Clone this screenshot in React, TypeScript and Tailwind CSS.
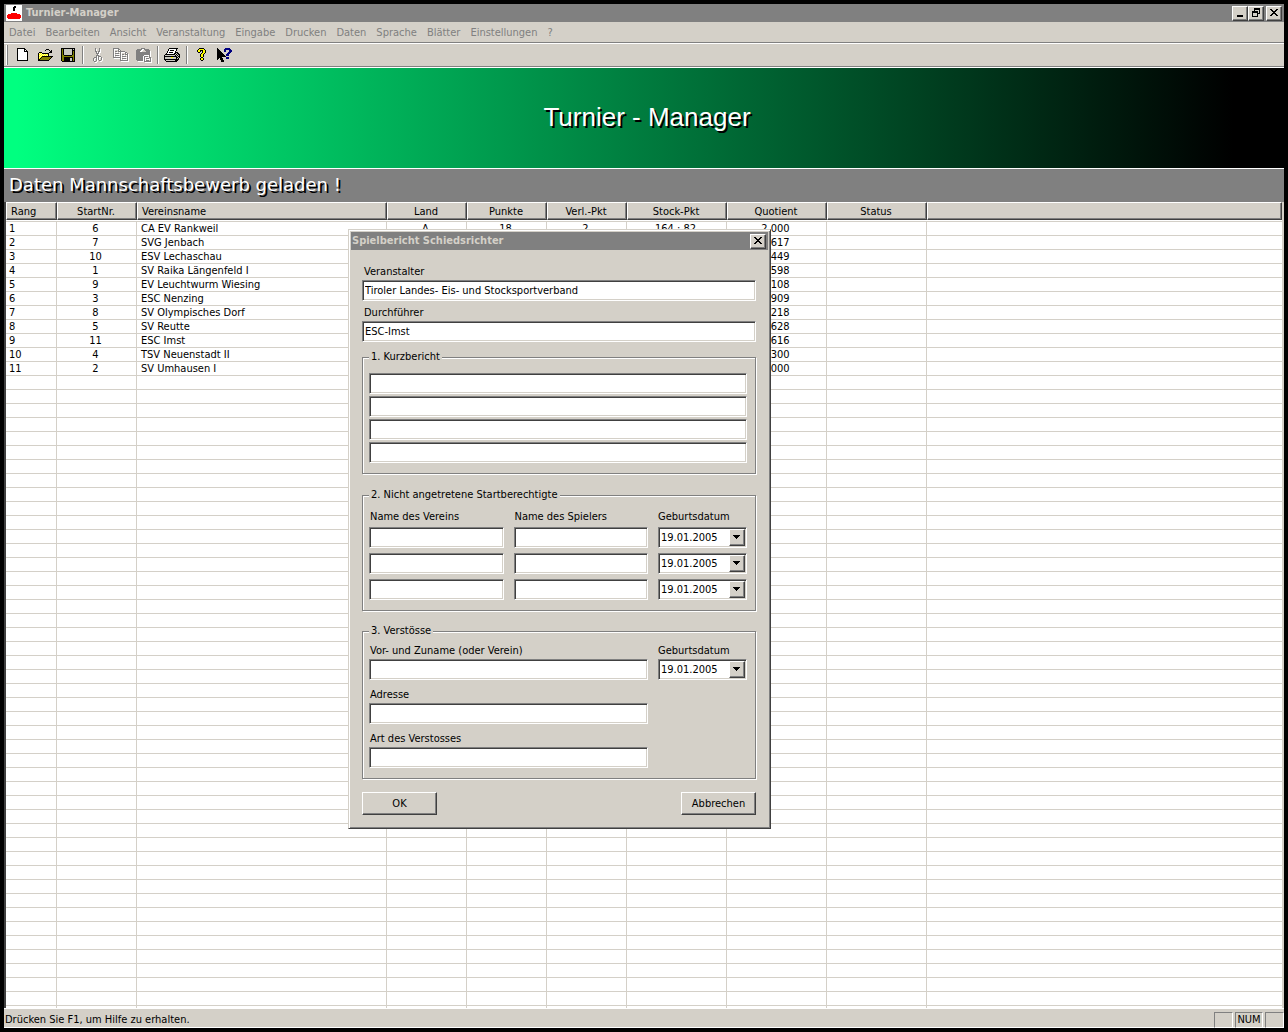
import type { ReactNode } from "react"

const MENU = [
  "Datei",
  "Bearbeiten",
  "Ansicht",
  "Veranstaltung",
  "Eingabe",
  "Drucken",
  "Daten",
  "Sprache",
  "Blätter",
  "Einstellungen",
  "?",
]

const COLUMNS = [
  { label: "Rang", width: "w-[51px]", align: "text-left" },
  { label: "StartNr.", width: "w-[80px]", align: "text-center" },
  { label: "Vereinsname", width: "w-[250px]", align: "text-left" },
  { label: "Land", width: "w-[80px]", align: "text-center" },
  { label: "Punkte", width: "w-[80px]", align: "text-center" },
  { label: "Verl.-Pkt", width: "w-[80px]", align: "text-center" },
  { label: "Stock-Pkt", width: "w-[100px]", align: "text-center" },
  { label: "Quotient", width: "w-[100px]", align: "text-center" },
  { label: "Status", width: "w-[100px]", align: "text-center" },
  { label: "", width: "", align: "text-left" },
]

const TEAMS = [
  ["1", "6", "CA EV Rankweil", "A", "18", "2", "164 : 82", "2,000"],
  ["2", "7", "SVG Jenbach", "", "", "", "", "1,617"],
  ["3", "10", "ESV Lechaschau", "", "", "", "", "1,449"],
  ["4", "1", "SV Raika Längenfeld I", "", "", "", "", "1,598"],
  ["5", "9", "EV Leuchtwurm Wiesing", "", "", "", "", "1,108"],
  ["6", "3", "ESC Nenzing", "", "", "", "", "0,909"],
  ["7", "8", "SV Olympisches Dorf", "", "", "", "", "1,218"],
  ["8", "5", "SV Reutte", "", "", "", "", "0,628"],
  ["9", "11", "ESC Imst", "", "", "", "", "0,616"],
  ["10", "4", "TSV Neuenstadt II", "", "", "", "", "0,300"],
  ["11", "2", "SV Umhausen I", "", "", "", "", "0,000"],
]

const ROWS = Array.from({ length: 80 }, (_, i) => TEAMS[i] ?? [])

const INK: Record<string, string> = {
  K: "#000000",
  W: "#ffffff",
  Y: "#ffff00",
  y: "#ffff99",
  O: "#808000",
  G: "#c8c8c0",
  S: "#808080",
  N: "#000080",
  R: "#ff0000",
}

const ICONS = {
  app: [
    "WWWWWWWWWWWWWWWW",
    "WWWWWWWWKKWWWWWW",
    "WWWWWWWKKKWWWWWW",
    "WWWWWWWKKWWWWWWW",
    "WWWWWWWKKWWWWWWW",
    "WWWWWWWKKWWWWWWW",
    "WWWWWWWWWWWWWWWW",
    "WWWWWWWWWWWWWWWW",
    "WWWWWRRRRRRWWWWW",
    "WWRRRRRRRRRRRRWW",
    "WRRRRRRRRRRRRRRW",
    "WRRRRRRRRRRRRRRW",
    "WRRRRRRRRRRRRRRW",
    "WWRRRRRRRRRRRRWW",
    "WWWWWWWWWWWWWWWW",
    "WWWWWWWWWWWWWWWW",
  ],
  new: [
    "KKKKKKKK...",
    "KWWWWWWKK..",
    "KWWWWWWKWK.",
    "KWWWWWWKKKK",
    "KWWWWWWWWWK",
    "KWWWWWWWWWK",
    "KWWWWWWWWWK",
    "KWWWWWWWWWK",
    "KWWWWWWWWWK",
    "KWWWWWWWWWK",
    "KWWWWWWWWWK",
    "KWWWWWWWWWK",
    "KKKKKKKKKKK",
  ],
  open: [
    ".........KKK....",
    "........K...K.K.",
    ".............KK.",
    "..KKK.......KKK.",
    ".KyYyKKKKKKK....",
    ".KYyYyYyYyYK....",
    ".KyYyYyYyYyK....",
    ".KYyYKKKKKKKKKKK",
    ".KyYKOOOOOOOOOK.",
    ".KYKOOOOOOOOOK..",
    ".KKOOOOOOOOOK...",
    ".KKKKKKKKKKK....",
  ],
  save: [
    "KKKKKKKKKKKKKK",
    "KOKGGGGGGGGKGK",
    "KOKGGGGGGGGKKK",
    "KOKGGGGGGGGKOK",
    "KOKGGGGGGGGKOK",
    "KOKGGGGGGGGKOK",
    "KOKGGGGGGGGKOK",
    "KOOKKKKKKKKOOK",
    "KOOOOOOOOOOOOK",
    "KOOKKKKKKKKKOK",
    "KOOKKKKKKGGKOK",
    "KOOKKKKKKGGKOK",
    "KOOKKKKKKGGKOK",
    ".KKKKKKKKKKKKK",
  ],
  cut: [
    "..S...S..",
    "..S...S..",
    "..S...S..",
    "..SS.SS..",
    "...S.S...",
    "...SSS...",
    "....S....",
    "...SSS...",
    "...S.SSS.",
    ".SSS.S..S",
    "S..S.S..S",
    "S..S.S..S",
    "S..S..SS.",
    ".SS......",
  ],
  copy: [
    "SSSSSS.........",
    "S....SS........",
    "S....S.S.......",
    "S.SS.SSSSSSS...",
    "S......S....SS.",
    "S.SSSS.S....S.S",
    "S......S.SS.SSS",
    "S.SSSS.S......S",
    "S......S.SSSS.S",
    "SSSSSSSS......S",
    ".......S.SSSS.S",
    ".......S......S",
    ".......SSSSSSSS",
  ],
  paste: [
    ".....SSSS......",
    ".SSSSS..SSSSS..",
    "SSSSS....SSSSS.",
    "SSSS......SSSS.",
    "SSSSSSSSSSSSSS.",
    "SSSSSSSSSSSSSS.",
    "SSSSSSSSSSSSSS.",
    "SSSSSSSS.....S.",
    "SSSSSSS.SSSS.S.",
    "SSSSSSS.S....SS",
    "SSSSSSS.S.SSS.S",
    "SSSSSSS.S.....S",
    ".SSSSSS.S.SSS.S",
    "........SSSSSSS",
  ],
  print: [
    ".....KKKKKKKKK..",
    "....KWWWWWWWK...",
    "....KWKKKKWWK...",
    "...KWWWWWWWK....",
    "...KWKKKKWWKKK..",
    "..KWWWWWWWKKGKK.",
    ".KKKKKKKKKKGKGKK",
    "KGGGGGGGGGGKGKGK",
    "KKKKKKKKKKKKKGKK",
    "KGGGGGGYYGGGKKGK",
    "KGGGGGGGGGGGKGK.",
    "KKKKKKKKKKKKKKK.",
    ".KGGGGGGGGGKKK..",
    "..KKKKKKKKKKK...",
  ],
  help: [
    "..KKKKK..",
    ".KYYYYYK.",
    "KYYKKKYYK",
    "KYYK.KYYK",
    ".KK..KYYK",
    "....KYYK.",
    "...KYYK..",
    "...KYYK..",
    "...KYYK..",
    "....KK...",
    "...KYYK..",
    "...KYYK..",
    "....KK...",
  ],
  context: [
    "K.......NNNNN..",
    "KK.....NNNNNNN.",
    "KKK....NN...NNN",
    "KKKK...NN...NNN",
    "KKKKK......NNN.",
    "KKKKKK....NNN..",
    "KKKKKKK..NNN...",
    "KKKKKKKK.NNN...",
    "KKKKKKKKK......",
    "KKKKK....NNN...",
    "KK.KKK...NNN...",
    "K..KKK.........",
    "....KKK........",
    "....KKK........",
  ],
  minimize: [
    "........",
    "........",
    "........",
    "........",
    "........",
    "........",
    ".KKKKKK.",
    ".KKKKKK.",
  ],
  restore: [
    "..KKKKKK",
    "..KKKKKK",
    "..K....K",
    "KKKKKK.K",
    "KKKKKK.K",
    "K....KKK",
    "K....K..",
    "K....K..",
    "KKKKKK..",
  ],
  close: [
    "KK....KK",
    ".KK..KK.",
    "..KKKK..",
    "...KK...",
    "..KKKK..",
    ".KK..KK.",
    "KK....KK",
  ],
  arrow: ["KKKKKKK", ".KKKKK.", "..KKK..", "...K..."],
}

type IconName = keyof typeof ICONS

function PixelIcon({ name, disabled }: { name: IconName; disabled?: boolean }) {
  const rows = ICONS[name]
  const w = rows[0].length + 1
  const h = rows.length + 1
  const cells = rows.flatMap((row, y) => row.split("").map((c, x) => ({ c, x, y }))).filter((p) => p.c !== ".")
  return (
    <svg width={w} height={h} viewBox={`0 0 ${w} ${h}`} shapeRendering="crispEdges" className="shrink-0" aria-hidden="true">
      {disabled && cells.map((p) => <rect key={`s${p.x}-${p.y}`} x={p.x + 1} y={p.y + 1} width="1" height="1" fill="#ffffff" />)}
      {cells.map((p) => (
        <rect key={`${p.x}-${p.y}`} x={p.x} y={p.y} width="1" height="1" fill={INK[p.c]} />
      ))}
    </svg>
  )
}

const RAISED =
  "bg-[#d4d0c8] border border-t-white border-l-white border-r-[#404040] border-b-[#404040] shadow-[inset_-1px_-1px_0_#808080]"
const SUNKEN =
  "bg-white border border-t-[#808080] border-l-[#808080] border-r-white border-b-white shadow-[inset_1px_1px_0_#404040,inset_-1px_-1px_0_#d4d0c8]"
const PANE = "h-4 border border-t-[#808080] border-l-[#808080] border-r-white border-b-white"

function CaptionButton({ icon, label }: { icon: IconName; label: string }) {
  return (
    <button type="button" aria-label={label} className={`flex h-[15px] w-4 items-center justify-center ${RAISED}`}>
      <PixelIcon name={icon} />
    </button>
  )
}

function ToolButton({ icon, label, disabled }: { icon: IconName; label: string; disabled?: boolean }) {
  return (
    <button type="button" aria-label={label} disabled={disabled} className="flex h-[22px] w-[23px] items-center justify-center">
      <PixelIcon name={icon} disabled={disabled} />
    </button>
  )
}

function Divider() {
  return <span className="mx-[2px] h-[18px] w-[2px] border-l border-[#808080] bg-white" />
}

function TextField({ id, label, value }: { id?: string; label?: string; value?: string }) {
  return <input id={id} type="text" aria-label={label} defaultValue={value} className={`block h-[21px] w-full px-[2px] outline-none ${SUNKEN}`} />
}

function DateField({ id, label }: { id?: string; label?: string }) {
  return (
    <div className="relative">
      <select id={id} aria-label={label} className={`block h-[21px] w-full appearance-none pl-[2px] outline-none ${SUNKEN}`}>
        <option>19.01.2005</option>
      </select>
      <span className={`pointer-events-none absolute top-[2px] right-[2px] flex h-[17px] w-4 items-center justify-center ${RAISED}`}>
        <PixelIcon name="arrow" />
      </span>
    </div>
  )
}

function Group({ title, className, children }: { title: string; className: string; children: ReactNode }) {
  return (
    <fieldset className={`border border-[#808080] px-[6px] pb-[10px] shadow-[1px_1px_0_#fff,inset_1px_1px_0_#fff] ${className}`}>
      <legend className="bg-[#d4d0c8] px-[2px]">{title}</legend>
      {children}
    </fieldset>
  )
}

function ReportDialog() {
  return (
    <form
      role="dialog"
      aria-label="Spielbericht Schiedsrichter"
      className="absolute top-[225px] left-[344px] w-[423px] border border-t-[#d4d0c8] border-l-[#d4d0c8] border-r-[#404040] border-b-[#404040] bg-[#d4d0c8] p-[2px] shadow-[inset_1px_1px_0_#fff,inset_-1px_-1px_0_#808080]"
    >
      <div className="flex h-[18px] items-center justify-between bg-[#808080] pr-[2px] pl-px font-bold text-[#d4d0c8]">
        <span>Spielbericht Schiedsrichter</span>
        <CaptionButton icon="close" label="Schließen" />
      </div>

      <div className="pt-[15px] pr-[12px] pb-[11px] pl-[11px]">
        <label htmlFor="veranstalter" className="mb-px block pl-[2px]">Veranstalter</label>
        <TextField id="veranstalter" value="Tiroler Landes- Eis- und Stocksportverband" />
        <label htmlFor="durchfuehrer" className="mt-[5px] mb-px block pl-[2px]">Durchführer</label>
        <TextField id="durchfuehrer" value="ESC-Imst" />

        <Group title="1. Kurzbericht" className="mt-[8px]">
          <div className="mr-[2px] flex flex-col gap-[2px] pt-[9px]">
            <TextField label="Kurzbericht Zeile 1" />
            <TextField label="Kurzbericht Zeile 2" />
            <TextField label="Kurzbericht Zeile 3" />
            <TextField label="Kurzbericht Zeile 4" />
          </div>
        </Group>

        <Group title="2. Nicht angetretene Startberechtigte" className="mt-[14px]">
          <div className="mr-[2px] grid grid-cols-[1fr_1fr_89px] gap-x-[10px] gap-y-[5px] pt-[8px]">
            <label htmlFor="verein1" className="-mb-[2px] pl-px">Name des Vereins</label>
            <label htmlFor="spieler1" className="-mb-[2px] pl-px">Name des Spielers</label>
            <label htmlFor="geburt1" className="-mb-[2px]">Geburtsdatum</label>
            <TextField id="verein1" />
            <TextField id="spieler1" />
            <DateField id="geburt1" />
            <TextField label="Name des Vereins 2" />
            <TextField label="Name des Spielers 2" />
            <DateField label="Geburtsdatum 2" />
            <TextField label="Name des Vereins 3" />
            <TextField label="Name des Spielers 3" />
            <DateField label="Geburtsdatum 3" />
          </div>
        </Group>

        <Group title="3. Verstösse" className="mt-[13px]">
          <div className="mr-[2px] grid grid-cols-[1fr_89px] gap-x-[10px] gap-y-px pt-[6px]">
            <label htmlFor="name" className="pl-px">Vor- und Zuname (oder Verein)</label>
            <label htmlFor="geburt">Geburtsdatum</label>
            <TextField id="name" />
            <DateField id="geburt" />
            <label htmlFor="adresse" className="col-start-1 mt-[7px] pl-px">Adresse</label>
            <div className="col-start-1"><TextField id="adresse" /></div>
            <label htmlFor="art" className="col-start-1 mt-[7px] pl-px">Art des Verstosses</label>
            <div className="col-start-1"><TextField id="art" /></div>
          </div>
        </Group>

        <div className="mt-[13px] flex justify-between">
          <button type="button" className={`h-[23px] w-[75px] ${RAISED}`}>OK</button>
          <button type="button" className={`h-[23px] w-[75px] ${RAISED}`}>Abbrechen</button>
        </div>
      </div>
    </form>
  )
}

function Results() {
  return (
    <div className="min-h-0 flex-1 overflow-hidden border-r-2 border-l-2 border-l-[#404040] border-r-[#d4d0c8] bg-white">
      <table className="w-full table-fixed border-separate border-spacing-0">
        <thead>
          <tr>
            {COLUMNS.map((c, i) => (
              <th key={i} className={`h-[18px] pt-[2px] pr-[6px] pb-0 pl-[4px] leading-[14px] font-normal ${c.width} ${c.align} ${RAISED}`}>{c.label}</th>
            ))}
          </tr>
        </thead>
        <tbody>
          <tr>
            {COLUMNS.map((c, i) => (
              <td key={i} className="h-[2px] border-b border-[#d4d0c8] p-0" />
            ))}
          </tr>
          {ROWS.map((row, r) => (
            <tr key={r}>
              {COLUMNS.map((c, i) => (
                <td key={i} className={`h-[14px] border-b border-[#d4d0c8] py-0 leading-[13px] ${i < 9 ? "border-r" : ""} ${i === 0 ? "pl-[3px]" : i === 2 ? "pl-[4px]" : "pr-[2px] pl-0"} ${c.align}`}>
                  {row[i]}
                </td>
              ))}
            </tr>
          ))}
        </tbody>
      </table>
    </div>
  )
}

export default function App() {
  return (
    <div className="h-screen bg-black p-1 font-['DejaVu_Sans_Condensed','DejaVu_Sans',sans-serif] text-[11px] leading-[14px] text-black">
      <div className="relative flex h-full flex-col bg-[#d4d0c8]">
        <header className="flex h-[18px] shrink-0 items-center bg-[#808080] px-[2px] font-bold text-[#d4d0c8]">
          <PixelIcon name="app" />
          <h1 className="ml-[3px] flex-1">Turnier-Manager</h1>
          <CaptionButton icon="minimize" label="Minimieren" />
          <CaptionButton icon="restore" label="Wiederherstellen" />
          <span className="w-[2px]" />
          <CaptionButton icon="close" label="Schließen" />
        </header>

        <nav className="flex h-[21px] shrink-0 items-center gap-[10px] border-b border-[#808080] px-[5px] pt-px text-[#808080]">
          {MENU.map((m) => (
            <button key={m} type="button" disabled>{m}</button>
          ))}
        </nav>

        <div className="flex h-6 shrink-0 items-center border-t border-b border-t-white border-b-[#808080] pl-[2px]">
          <span className="mr-[3px] h-5 w-[2px] border-r border-[#808080] bg-white" />
          <ToolButton icon="new" label="Neu" />
          <ToolButton icon="open" label="Öffnen" />
          <ToolButton icon="save" label="Speichern" />
          <Divider />
          <ToolButton icon="cut" label="Ausschneiden" disabled />
          <ToolButton icon="copy" label="Kopieren" disabled />
          <ToolButton icon="paste" label="Einfügen" disabled />
          <Divider />
          <ToolButton icon="print" label="Drucken" />
          <Divider />
          <ToolButton icon="help" label="Info" />
          <ToolButton icon="context" label="Hilfe" />
        </div>

        <div className="flex h-[101px] shrink-0 items-center justify-center border-t border-white bg-linear-to-r/srgb from-[#00ff80] from-1% to-black to-96% pb-[2px] pl-[6px] font-['Liberation_Sans',Arial,sans-serif] text-[26px] leading-8 text-white [text-shadow:2px_2px_0_#000]">
          Turnier - Manager
        </div>
        <div className="flex h-[34px] shrink-0 items-center border-t border-white bg-[#808080] px-[5px] pb-[2px] font-['DejaVu_Sans',sans-serif] text-[18px] leading-6 text-white [text-shadow:2px_2px_0_#000]">
          Daten Mannschaftsbewerb geladen !
        </div>

        <Results />

        <footer className="flex h-5 shrink-0 items-center gap-[2px] border-t border-b border-white pt-[3px] pl-px">
          <span className="flex-1">Drücken Sie F1, um Hilfe zu erhalten.</span>
          <span className={`w-[19px] ${PANE}`} />
          <span className={`w-7 text-center ${PANE}`}>NUM</span>
          <span className={`w-[19px] ${PANE}`} />
        </footer>

        <ReportDialog />
      </div>
    </div>
  )
}
